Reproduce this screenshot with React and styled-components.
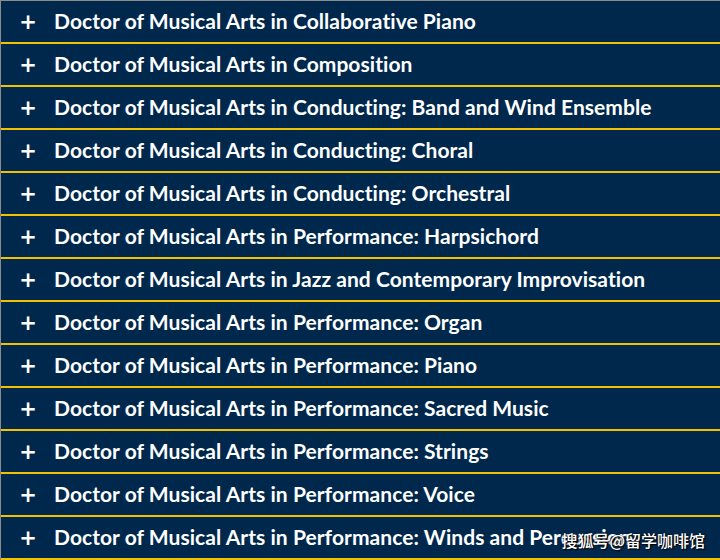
import React from "react";
import styled, { createGlobalStyle } from "styled-components";

const Global = createGlobalStyle`
  html, body { margin: 0; padding: 0; background: #ffffff; }
  body { font-family: Lato, "Noto Sans", sans-serif; }
`;

const Page = styled.div`
  position: relative;
  width: 720px;
  height: 560px;
  overflow: hidden;
`;

const List = styled.ul`
  list-style: none;
  margin: 0;
  padding: 0;
  border-top: 1px solid #8c8c8c;
  border-left: 1px solid #8c8c8c;
  background: #00284c;
`;

const Row = styled.li`
  display: flex;
  align-items: center;
  height: 41px;
  border-bottom: 2px solid #f2c200;
  background: #00284c;
  color: #ffffff;
`;

const Plus = styled.span`
  width: 52px;
  flex: none;
  display: flex;
  justify-content: center;
  padding-left: 1px;
  padding-top: 2px;
  font-family: "DejaVu Sans", sans-serif;
  font-size: 21px;
  font-weight: 700;
  line-height: 1;
`;

const Title = styled.span`
  font-family: Lato, "Noto Sans", sans-serif;
  font-weight: 700;
  font-size: 21px;
  line-height: 1;
  padding-bottom: 2px;
  letter-spacing: 0.05px;
  font-variant-ligatures: none;
  white-space: nowrap;
`;

const Watermark = styled.div`
  position: absolute;
  right: 15px;
  bottom: 8px;
  font-family: "Noto Sans CJK SC", sans-serif;
  font-size: 16px;
  font-weight: 500;
  color: #ffffff;
  text-shadow: 1px 1px 1px #000, 0 0 2px #000;
`;

const items = [
  "Doctor of Musical Arts in Collaborative Piano",
  "Doctor of Musical Arts in Composition",
  "Doctor of Musical Arts in Conducting: Band and Wind Ensemble",
  "Doctor of Musical Arts in Conducting: Choral",
  "Doctor of Musical Arts in Conducting: Orchestral",
  "Doctor of Musical Arts in Performance: Harpsichord",
  "Doctor of Musical Arts in Jazz and Contemporary Improvisation",
  "Doctor of Musical Arts in Performance: Organ",
  "Doctor of Musical Arts in Performance: Piano",
  "Doctor of Musical Arts in Performance: Sacred Music",
  "Doctor of Musical Arts in Performance: Strings",
  "Doctor of Musical Arts in Performance: Voice",
  "Doctor of Musical Arts in Performance: Winds and Percussion",
];

export default function App() {
  return (
    <Page>
      <Global />
      <List>
        {items.map((t) => (
          <Row key={t}>
            <Plus>+</Plus>
            <Title>{t}</Title>
          </Row>
        ))}
      </List>
      <Watermark>搜狐号@留学咖啡馆</Watermark>
    </Page>
  );
}
